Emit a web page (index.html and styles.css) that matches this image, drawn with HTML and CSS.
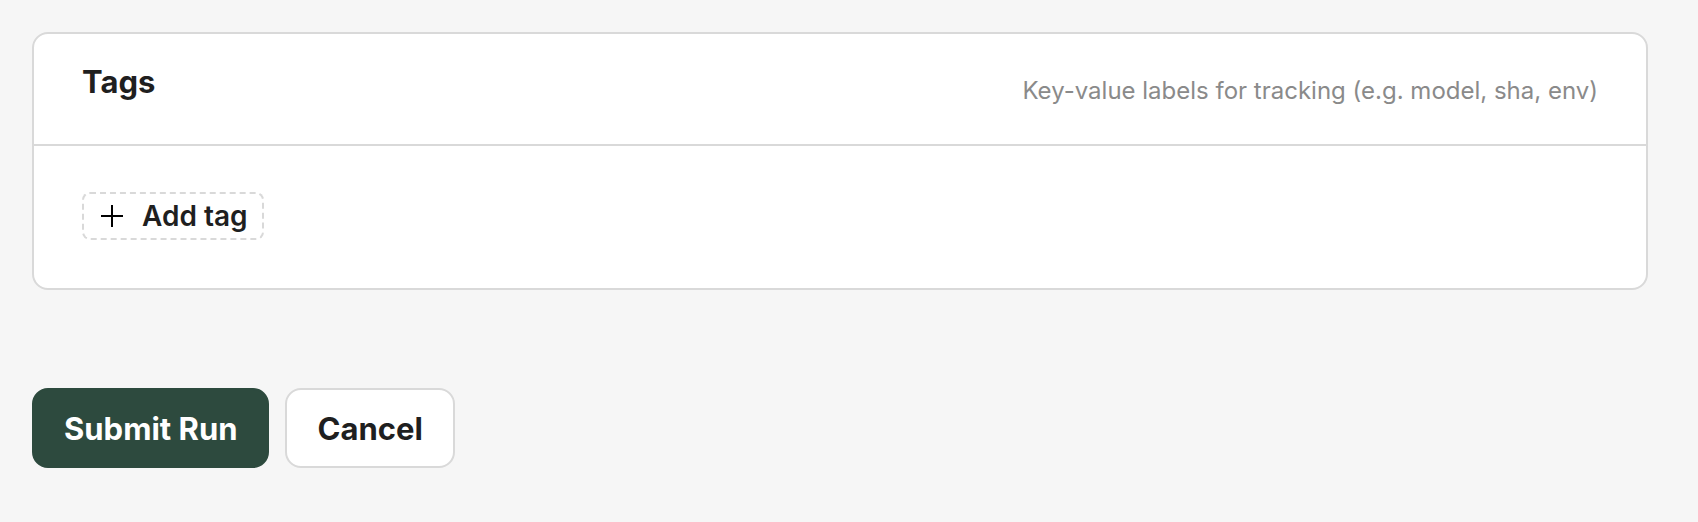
FILE: index.html
```html
<!DOCTYPE html>
<html lang="en">
<head>
  <meta charset="UTF-8"/>
  <meta name="viewport" content="width=device-width, initial-scale=1"/>
  <title>Submit Run</title>
  <link rel="stylesheet" href="styles.css">
</head>
<body>
  <form class="run-form">
    <!-- Tags -->
    <section class="card">
      <div class="card-header">
        <h2 class="card-title">Tags</h2>
        <span class="card-hint">Key-value labels for tracking (e.g. model, sha, env)</span>
      </div>
      <div class="card-body">
        <button type="button" class="add-btn">
          <svg class="icon" viewBox="0 0 24 24" aria-hidden="true">
            <path d="M12 1v22M1 12h22"/>
          </svg>
          Add tag
        </button>
      </div>
    </section>

    <!-- Actions -->
    <div class="actions">
      <button type="submit" class="btn btn-primary">Submit Run</button>
      <button type="button" class="btn">Cancel</button>
    </div>
  </form>
</body>
</html>
```

FILE: styles.css
```css
* { box-sizing: border-box; }
body {
  margin: 0;
  font-family: Inter, sans-serif;
  background: #f6f6f6;
  color: #1f1f1f;
}
button {
  font-family: inherit;
  font-weight: 700;
  color: inherit;
  cursor: pointer;
}
.run-form {
  padding: 32px 50px 32px 32px;
}

/* Card */
.card {
  background: #fff;
  border: 2px solid #d9d9d9;
  border-radius: 16px;
}
.card-header {
  display: flex;
  justify-content: space-between;
  align-items: flex-start;
  padding: 32px 48px;
  border-bottom: 2px solid #d9d9d9;
}
.card-title {
  margin: 0;
  font-size: 31px;
  font-weight: 700;
  line-height: 32px;
}
.card-hint {
  padding-top: 8px;
  padding-bottom: 4px;
  font-size: 24px;
  line-height: 34px;
  color: #8a8a8a;
}
.card-body {
  display: flex;
  padding: 46px 48px 48px;
}

/* Buttons */
.add-btn {
  display: flex;
  align-items: center;
  gap: 18px;
  height: 48px;
  padding: 0 14px 0 16px;
  background: transparent;
  border: 2px dashed #d9d9d9;
  border-radius: 8px;
  font-size: 28px;
  font-weight: 600;
}
.icon {
  width: 24px;
  height: 24px;
  fill: none;
  stroke: #000;
  stroke-width: 2;
}
.actions {
  display: flex;
  gap: 16px;
  margin-top: 98px;
}
.btn {
  height: 80px;
  padding: 0 30px;
  background: #fff;
  border: 2px solid #d9d9d9;
  border-radius: 16px;
  font-size: 31px;
}
.btn-primary {
  background: #2d4a3e;
  border-color: #2d4a3e;
  color: #fff;
}
```
